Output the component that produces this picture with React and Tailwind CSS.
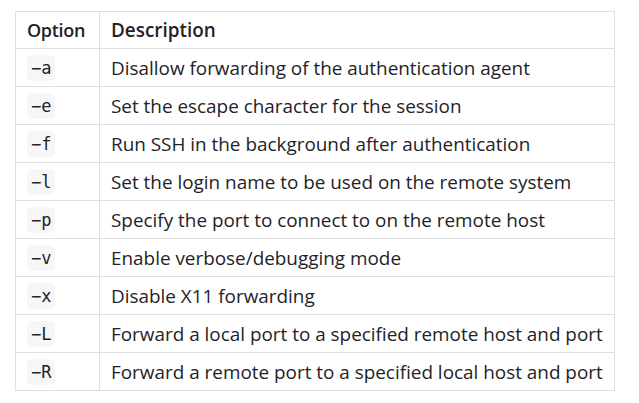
const rows = [
  ["-a", "Disallow forwarding of the authentication agent"],
  ["-e", "Set the escape character for the session"],
  ["-f", "Run SSH in the background after authentication"],
  ["-l", "Set the login name to be used on the remote system"],
  ["-p", "Specify the port to connect to on the remote host"],
  ["-v", "Enable verbose/debugging mode"],
  ["-x", "Disable X11 forwarding"],
  ["-L", "Forward a local port to a specified remote host and port"],
  ["-R", "Forward a remote port to a specified local host and port"],
];

export default function App() {
  return (
    <div className="min-h-screen bg-white pl-[15px] pt-[11px]" style={{ fontFamily: "'Open Sans', sans-serif" }}>
      <table className="w-[600px] table-fixed border-collapse text-[18.9px] leading-[26px] text-[#1f2328]">
        <colgroup>
          <col className="w-[84px]" />
          <col />
        </colgroup>
        <thead>
          <tr className="h-[37px]">
            <th className="whitespace-nowrap border border-[#dfdfdf] px-[11px] text-left text-[18px] font-semibold tracking-[-0.3px]">Option</th>
            <th className="border border-[#dfdfdf] px-[11px] text-left font-semibold">Description</th>
          </tr>
        </thead>
        <tbody>
          {rows.map(([opt, desc]) => (
            <tr key={opt} className="h-[38px]">
              <td className="border border-[#dfdfdf] px-[11px] py-0">
                <code
                  className="inline-block rounded-[5px] bg-[#f6f6f6] px-[4px] align-middle text-[17px] leading-[26px]"
                  style={{ fontFamily: "'DejaVu Sans Mono', monospace" }}
                >
                  {opt.replace("-", "\u2212")}
                </code>
              </td>
              <td className="whitespace-nowrap border border-[#dfdfdf] px-[11px] py-0">{desc}</td>
            </tr>
          ))}
        </tbody>
      </table>
    </div>
  );
}
